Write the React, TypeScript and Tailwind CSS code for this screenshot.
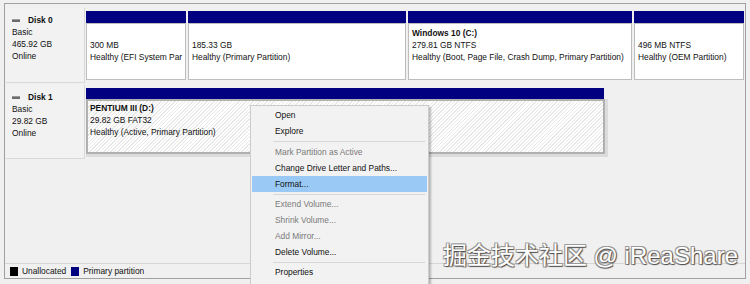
import React from 'react';

// Disk Management: disk map with a context menu opened over Disk 1

type Part = {
  width: number;
  name?: string;
  size: string;
  status: string;
};

const disk0Parts: Part[] = [
  { width: 100, size: '300 MB', status: 'Healthy (EFI System Par' },
  { width: 218, size: '185.33 GB', status: 'Healthy (Primary Partition)' },
  { width: 224, name: 'Windows 10  (C:)', size: '279.81 GB NTFS', status: 'Healthy (Boot, Page File, Crash Dump, Primary Partition)' },
  { width: 110, size: '496 MB NTFS', status: 'Healthy (OEM Partition)' },
];

type MenuEntry = { label: string; disabled?: boolean; active?: boolean } | { sep: number };

const menu: MenuEntry[] = [
  { label: 'Open' },
  { label: 'Explore' },
  { sep: 5 },
  { label: 'Mark Partition as Active', disabled: true },
  { label: 'Change Drive Letter and Paths...' },
  { label: 'Format...', active: true },
  { sep: 4 },
  { label: 'Extend Volume...', disabled: true },
  { label: 'Shrink Volume...', disabled: true },
  { label: 'Add Mirror...', disabled: true },
  { label: 'Delete Volume...' },
  { sep: 4 },
  { label: 'Properties' },
];

function DiskLabel({ name, size, h }: { name: string; size: string; h: string }) {
  return (
    <div className={`w-[79px] ${h} shrink-0 bg-[#f2f2f2] border-r border-b border-[#d9d9d9] pl-[6px] leading-[12px] text-[#111]`}>
      <div className="flex items-center h-[12px] mt-[6px]">
        <div className="w-[8px] h-[3px] bg-[#6b6b6b] border-t border-[#9a9a9a] mr-[8px]" />
        <span className="font-bold">{name}</span>
      </div>
      <div>Basic</div>
      <div>{size}</div>
      <div>Online</div>
    </div>
  );
}

function PartitionBox({ p }: { p: Part }) {
  return (
    <div className="flex flex-col shrink-0 pt-[3px]" style={{ width: p.width }}>
      <div className="h-[12px] bg-[#000080]" />
      <div className="h-[57px] bg-white border border-[#bdbdbd] pl-[3px] pt-[3px] leading-[12px] text-[#111] overflow-hidden whitespace-nowrap">
        <div className="font-bold h-[12px]">{p.name ?? ''}</div>
        <div>{p.size}</div>
        <div>{p.status}</div>
      </div>
    </div>
  );
}

export default function App() {
  return (
    <div className="relative w-[750px] h-[284px] overflow-hidden bg-[#f0f0f0] pt-[3px] pl-[4px] font-['Liberation_Sans',Arial,sans-serif] text-[8.4px]">
      <div className="w-[742px] h-[276px] border border-[#a0a0a0] flex flex-col">
        <div className="pl-[1px] pt-[4px] flex flex-col gap-[2px]">
          {/* Disk 0 */}
          <div className="flex gap-[1px] h-[75px]">
            <DiskLabel name="Disk 0" size="465.92 GB" h="h-[75px]" />
            <div className="flex gap-[2px]">
              {disk0Parts.map((p) => (
                <PartitionBox key={p.size} p={p} />
              ))}
            </div>
          </div>

          {/* Disk 1 */}
          <div className="flex gap-[1px] h-[74px]">
            <DiskLabel name="Disk 1" size="29.82 GB" h="h-[74px]" />
            <div className="flex flex-col pt-[3px] w-[522px]">
              <div className="h-[11px] w-[518px] bg-[#000080]" />
              <div className="w-[522px] h-[58px] border-r-[3px] border-b-[3px] border-[#dcdcdc]">
                <div className="w-[519px] h-[55px] border-[2px] border-[#b0b0b0] bg-white bg-[repeating-linear-gradient(135deg,#ffffff_0px,#ffffff_1.5px,#e8e8e8_1.5px,#e8e8e8_2.5px)] pl-[2px] pt-[1px] leading-[12px] text-[#111] whitespace-nowrap">
                  <div className="font-bold">PENTIUM III  (D:)</div>
                  <div>29.82 GB FAT32</div>
                  <div>Healthy (Active, Primary Partition)</div>
                </div>
              </div>
            </div>
          </div>
        </div>

        <div className="flex-1" />

        {/* Legend */}
        <div className="h-[15px] border-t border-[#d6d6d6] flex items-center pl-[5px] text-[#111]">
          <div className="w-[8px] h-[9px] bg-black mr-[4px]" />
          <span className="mr-[5px]">Unallocated</span>
          <div className="w-[8px] h-[9px] bg-[#000080] mr-[4px]" />
          <span>Primary partition</span>
        </div>
      </div>

      {/* Context menu */}
      <div className="absolute left-[250px] top-[105px] w-[179px] h-[184px] bg-[#f2f2f2] border border-[#cccccc] shadow-[2px_2px_2px_rgba(0,0,0,0.25)] pt-[1px] px-[1px]">
        {menu.map((m, i) =>
          'sep' in m ? (
            <div key={i} className="flex items-center" style={{ height: m.sep }}>
              <div className="ml-[21px] w-[152px] h-px bg-[#d7d7d7]" />
            </div>
          ) : (
            <div
              key={i}
              className={`h-[16px] flex items-center pl-[23px] ${m.active ? 'bg-[#99c9f4]' : ''} ${m.disabled ? 'text-[#7a7a7a]' : 'text-[#111111]'}`}
            >
              {m.label}
            </div>
          )
        )}
      </div>

      {/* Watermark */}
      <div className="absolute right-[12px] top-[241px] text-[24px] leading-[30px] text-white font-['Liberation_Sans','Noto_Sans_CJK_SC',sans-serif] [text-shadow:1px_1px_1px_#4a4a4a,-1px_-1px_0_#9a9a9a,1px_-1px_0_#9a9a9a,-1px_1px_0_#9a9a9a] whitespace-nowrap">
        掘金技术社区 @ iReaShare
      </div>
    </div>
  );
}
